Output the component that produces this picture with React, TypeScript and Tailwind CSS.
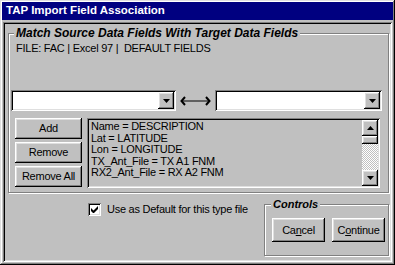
import React from "react";

const raised =
  "shadow-[inset_-1px_-1px_#000,inset_1px_1px_#fff,inset_-2px_-2px_#808080,inset_2px_2px_#dfdfdf]";
const sunken =
  "shadow-[inset_1px_1px_#808080,inset_-1px_-1px_#fff,inset_2px_2px_#000,inset_-2px_-2px_#dfdfdf]";

function DownArrow() {
  return (
    <svg width="7" height="4" viewBox="0 0 7 4">
      <path d="M0 0h7L3.5 4z" fill="#000" />
    </svg>
  );
}
function UpArrow() {
  return (
    <svg width="7" height="4" viewBox="0 0 7 4">
      <path d="M0 4h7L3.5 0z" fill="#000" />
    </svg>
  );
}

function Combo({ w }: { w: string }) {
  return (
    <div className={`${w} h-[21px] bg-white ${sunken} flex justify-end items-center pr-[2px]`}>
      <div className={`w-[16px] h-[17px] bg-[#c0c0c0] ${raised} flex items-center justify-center`}>
        <DownArrow />
      </div>
    </div>
  );
}

function Btn({ children, cls }: { children: React.ReactNode; cls: string }) {
  return (
    <div className={`${cls} bg-[#c0c0c0] ${raised} flex items-center justify-center text-[11px] tracking-[-0.25px]`}>
      {children}
    </div>
  );
}

export default function App() {
  const lines = [
    "Name = DESCRIPTION",
    "Lat = LATITUDE",
    "Lon = LONGITUDE",
    "TX_Ant_File = TX A1 FNM",
    "RX2_Ant_File = RX A2 FNM",
  ];
  return (
    <div className="w-[395px] h-[265px] bg-[#c0c0c0] flex flex-col p-[2px] font-['Liberation_Sans',Arial,sans-serif] text-black shadow-[inset_-1px_-1px_#000,inset_1px_1px_#dfdfdf,inset_-2px_-2px_#808080,inset_2px_2px_#fff]">
      <div className="h-[18px] bg-[#000080] text-white font-bold text-[11.5px] pl-[4px] flex items-center shrink-0">
        TAP Import Field Association
      </div>
      <div className={`flex-1 mt-[2px] mx-[1px] mb-[1px] p-[2px] ${sunken} flex flex-col`}>
        {/* main group */}
        <div className="relative ml-[3px] mr-[1px] mt-[9px] h-[160px] border border-[#808080] shadow-[inset_1px_1px_#fff,1px_1px_#fff] flex flex-col pl-[2px]">
          <div className="absolute left-[5px] top-[-8px] bg-[#c0c0c0] px-[2px] font-bold italic text-[12px] leading-[14px]">
            Match Source Data Fields With Target Data Fields
          </div>
          <div className="ml-[5px] mt-[8px] text-[11px] leading-[13px] tracking-[-0.25px] whitespace-pre">
            FILE: FAC | Excel 97 |  DEFAULT FIELDS
          </div>
          <div className="flex items-center mt-[35px]">
            <Combo w="w-[165px]" />
            <div className="w-[39px] flex justify-center">
              <svg width="31" height="10" viewBox="0 0 31 10">
                <path d="M5 1L1.5 5L5 9" stroke="#000" strokeWidth="2" fill="none" />
                <path d="M2 5H29" stroke="#000" strokeWidth="1" />
                <path d="M26 1L29.5 5L26 9" stroke="#000" strokeWidth="2" fill="none" />
              </svg>
            </div>
            <Combo w="w-[167px]" />
          </div>
          <div className="flex mt-[7px] ml-[4px]">
            <div className="flex flex-col gap-[3px] w-[67px]">
              <Btn cls="h-[21px]">Add</Btn>
              <Btn cls="h-[21px]">Remove</Btn>
              <Btn cls="h-[21px]">Remove All</Btn>
            </div>
            <div className={`ml-[5px] w-[293px] h-[70px] ${sunken} flex p-[2px]`}>
              <div className="flex-1 pl-[2px] pt-[1px] text-[11px] leading-[11.6px] tracking-[-0.25px] whitespace-pre">
                {lines.map((l) => (
                  <div key={l}>{l}</div>
                ))}
              </div>
              <div className="w-[16px] flex flex-col">
                <div className={`h-[16px] ${raised} bg-[#c0c0c0] flex items-center justify-center`}>
                  <UpArrow />
                </div>
                <div className={`h-[8px] ${raised} bg-[#c0c0c0]`} />
                <div className="flex-1 bg-[repeating-conic-gradient(#fff_0_25%,#c0c0c0_0_50%)] bg-[length:2px_2px]" />
                <div className={`h-[16px] ${raised} bg-[#c0c0c0] flex items-center justify-center`}>
                  <DownArrow />
                </div>
              </div>
            </div>
          </div>
        </div>
        {/* bottom */}
        <div className="flex mt-[10px]">
          <div className="ml-[83px] flex items-center h-[13px] gap-[6px]">
            <div className={`w-[13px] h-[13px] bg-white ${sunken} flex items-center justify-center`}>
              <svg width="7" height="7" viewBox="0 0 7 7">
                <path d="M0 2v3l2 2h1l4-4V0L2.5 4.5z" fill="#000" />
              </svg>
            </div>
            <span className="text-[11px] tracking-[-0.25px]">Use as Default for this type file</span>
          </div>
          <div className="relative ml-auto mr-[1px] mt-[1px] w-[125px] h-[52px] border border-[#808080] shadow-[inset_1px_1px_#fff,1px_1px_#fff] flex items-start gap-[7px] pl-[7px] pt-[13px]">
            <div className="absolute left-[6px] top-[-7px] bg-[#c0c0c0] px-[2px] font-bold italic text-[11px] leading-[13px]">
              Controls
            </div>
            <Btn cls="w-[53px] h-[24px]">
              <span>
                Ca<span className="underline">n</span>cel
              </span>
            </Btn>
            <Btn cls="w-[53px] h-[24px]">
              <span>
                C<span className="underline">o</span>ntinue
              </span>
            </Btn>
          </div>
        </div>
      </div>
    </div>
  );
}
